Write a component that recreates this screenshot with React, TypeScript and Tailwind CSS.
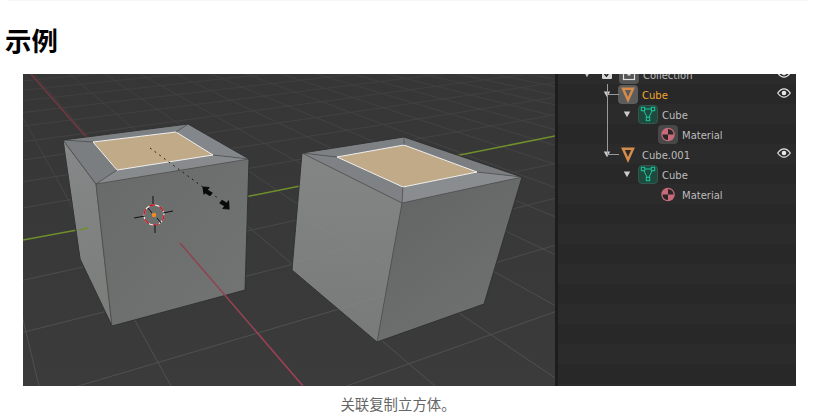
import React from "react";

const VPA = [-64, -40];
const VPB = [1640, -75];

const aLines: number[][] = [];
for (let k = -2; k <= 16; k++) aLines.push([VPA[0], VPA[1], 303 + 132 * k, 386]);
const bLines: number[][] = [];
for (let k = -11; k <= 5; k++) {
  if (k === 0) continue;
  const inv = 0.003175 - 0.00036 * k;
  const y23 = 1 / inv - 75;
  const f = (1640 - 555) / (1640 - 23);
  bLines.push([23, y23, 555, (y23 + 75) * f - 75]);
}

function Viewport() {
  return (
    <svg viewBox="23 74 532 312" className="block h-[312px] w-[532px] shrink-0">
      <defs>
        <linearGradient id="g" gradientUnits="userSpaceOnUse" x1="0" y1="74" x2="0" y2="320">
          <stop offset="0" stopColor="#3e3e3e" />
          <stop offset="0.45" stopColor="#454545" />
          <stop offset="1" stopColor="#4f4f4f" />
        </linearGradient>
        <linearGradient id="bg" x1="0" y1="0" x2="0" y2="1">
          <stop offset="0" stopColor="#363636" />
          <stop offset="1" stopColor="#3b3b3b" />
        </linearGradient>
        <linearGradient id="f1" gradientUnits="userSpaceOnUse" x1="96" y1="184" x2="245" y2="300">
          <stop offset="0" stopColor="#696b6b" />
          <stop offset="1" stopColor="#727473" />
        </linearGradient>
        <linearGradient id="l1" gradientUnits="userSpaceOnUse" x1="70" y1="150" x2="100" y2="300">
          <stop offset="0" stopColor="#858788" />
          <stop offset="1" stopColor="#7b7e7b" />
        </linearGradient>
        <linearGradient id="l2" gradientUnits="userSpaceOnUse" x1="350" y1="170" x2="340" y2="330">
          <stop offset="0" stopColor="#838585" />
          <stop offset="1" stopColor="#787b79" />
        </linearGradient>
        <linearGradient id="f2" gradientUnits="userSpaceOnUse" x1="400" y1="200" x2="480" y2="310">
          <stop offset="0" stopColor="#646666" />
          <stop offset="1" stopColor="#6e706f" />
        </linearGradient>
        <linearGradient id="red" gradientUnits="userSpaceOnUse" x1="180" y1="243" x2="303" y2="386">
          <stop offset="0" stopColor="#8c4450" />
          <stop offset="1" stopColor="#9e3f52" />
        </linearGradient>
      </defs>
      <rect x="23" y="74" width="532" height="312" fill="url(#bg)" />
      {aLines.map((l, i) => (
        <line key={i} x1={l[0]} y1={l[1]} x2={l[2]} y2={l[3]} stroke="url(#g)" strokeWidth="1" />
      ))}
      {bLines.map((l, i) => (
        <line key={i} x1={l[0]} y1={l[1]} x2={l[2]} y2={l[3]} stroke="url(#g)" strokeWidth="1" />
      ))}
      <line x1="31" y1="74" x2="87" y2="138" stroke="#713841" strokeWidth="1.6" />
      <line x1="23" y1="240" x2="88" y2="228" stroke="#6f8f2b" strokeWidth="1.6" />
      <line x1="240" y1="198" x2="310" y2="184" stroke="#6f8f2b" strokeWidth="1.6" />
      <line x1="455" y1="156" x2="555" y2="136" stroke="#6f8f2b" strokeWidth="1.6" />

      {/* cube 1 */}
      <polygon points="63,140 96,184 112,326 80,259" fill="url(#l1)" stroke="#4a4b4b" strokeWidth="0.8" />
      <line x1="79" y1="230" x2="88" y2="228" stroke="#6f8f2b" strokeWidth="1.4" />
      <polygon points="96,184 249,159 245,290 112,326" fill="url(#f1)" />
      <polygon points="63,140 93,142 117,170 96,184" fill="#7b7e81" />
      <polygon points="63,140 188,124 176,132 93,142" fill="#7d8083" />
      <polygon points="188,124 249,159 213,155 176,132" fill="#83868a" />
      <polygon points="96,184 117,170 213,155 249,159" fill="#888b8e" />
      <polygon points="93,142 176,132 213,155 117,170" fill="#c0aa88" stroke="#f2f2f2" strokeWidth="1" />
      <g stroke="#4c4d4e" strokeWidth="0.7" fill="none">
        <polyline points="63,140 96,184 112,326" />
        <line x1="96" y1="184" x2="249" y2="159" />
        <line x1="63" y1="140" x2="93" y2="142" />
        <line x1="188" y1="124" x2="176" y2="132" />
        <line x1="249" y1="159" x2="213" y2="155" />
        <line x1="96" y1="184" x2="117" y2="170" />
      </g>
      <g stroke="#2e2f2f" strokeWidth="0.9" fill="none">
        <polyline points="63,140 188,124 249,159 245,290 112,326 80,259 63,140" />
      </g>
      <line x1="180" y1="243" x2="303" y2="386" stroke="url(#red)" strokeWidth="1.6" />

      {/* cube 2 */}
      <polygon points="302,153 402,203 377,342 292,270" fill="url(#l2)" />
      <polygon points="402,203 522,177 484,304 377,342" fill="url(#f2)" />
      <polygon points="302,153 337,157 403,187 402,203" fill="#7f8285" />
      <polygon points="302,153 404,137 404,145 337,157" fill="#7e8184" />
      <polygon points="404,137 522,177 477,172 404,145" fill="#7b7e81" />
      <polygon points="402,203 403,187 477,172 522,177" fill="#8a8d90" />
      <polygon points="337,157 404,145 477,172 403,187" fill="#c0aa88" stroke="#f2f2f2" strokeWidth="1" />
      <g stroke="#8a8c8b" strokeWidth="0.8" fill="none" opacity="0.45">
        <line x1="293" y1="263" x2="363" y2="243" />
        <line x1="298" y1="215" x2="390" y2="267" />
        <line x1="342" y1="308" x2="385" y2="295" />
      </g>
      <g stroke="#4c4d4e" strokeWidth="0.7" fill="none">
        <polyline points="302,153 402,203 377,342" />
        <line x1="402" y1="203" x2="522" y2="177" />
        <line x1="302" y1="153" x2="337" y2="157" />
        <line x1="404" y1="137" x2="404" y2="145" />
        <line x1="522" y1="177" x2="477" y2="172" />
        <line x1="402" y1="203" x2="403" y2="187" />
      </g>
      <g stroke="#2e2f2f" strokeWidth="0.9" fill="none">
        <polyline points="302,153 404,137 522,177 484,304 377,342 292,270 302,153" />
      </g>

      {/* 3D cursor */}
      <g>
        <circle cx="154" cy="215" r="10" fill="none" stroke="#ececec" strokeWidth="1.2" />
        <circle cx="154" cy="215" r="10" fill="none" stroke="#c8141f" strokeWidth="1.3" strokeDasharray="6 4.500" />
        <g stroke="#111" strokeWidth="1" fill="none">
          <line x1="134" y1="218" x2="145" y2="216" />
          <line x1="163" y1="213" x2="173" y2="211" />
          <line x1="153" y1="196" x2="153" y2="204" />
          <line x1="155" y1="225" x2="155" y2="233" />
          <line x1="148" y1="208" x2="152" y2="213" />
          <line x1="157" y1="218" x2="161" y2="223" />
        </g>
        <circle cx="154" cy="215" r="2.200" fill="#ef8f1a" />
      </g>

      {/* dashed line and arrows */}
      <line x1="150" y1="148" x2="219" y2="199" stroke="#0a0a0a" strokeWidth="0.9" strokeDasharray="1.800 4" />
      <g fill="#0a0a0a" stroke="#0a0a0a" strokeWidth="1.2" strokeLinejoin="round">
        <polygon points="203,187 209,187.500 207,190 212,193 210,195.500 205,192.500 204,194" />
        <polygon points="229,209 223,208.500 225,206 220,203 222,200.500 227,203.500 228.500,201" />
      </g>
    </svg>
  );
}

function Tri() {
  return (
    <svg viewBox="0 0 8 8" className="h-2 w-2 shrink-0">
      <polygon points="0.800,1.500 7.200,1.500 4,7.200" fill="#cccccc" />
    </svg>
  );
}

function Eye() {
  return (
    <svg viewBox="0 0 14 10" className="h-[10px] w-[14px] shrink-0">
      <path d="M0.700 5C3 1.800 5 0.800 7 0.800s4 1 6.300 4.200C11 8.200 9 9.200 7 9.200S3 8.200 0.700 5Z" fill="none" stroke="#e6e6e6" strokeWidth="1.2" />
      <circle cx="7" cy="5" r="2.300" fill="#e6e6e6" />
    </svg>
  );
}

function ObjIcon() {
  return (
    <svg viewBox="0 0 20 20" className="h-5 w-5 shrink-0">
      <polygon points="5,4.800 15,4.800 10,16" fill="none" stroke="#d58b4a" strokeWidth="2.500" />
    </svg>
  );
}

function MeshIcon() {
  return (
    <svg viewBox="0 0 20 20" className="h-5 w-5 shrink-0">
      <g fill="none" stroke="#1ec49e" strokeWidth="1">
        <polyline points="5,5 15,5 10,15 5,5" />
        <rect x="3.300" y="3.300" width="3.400" height="3.400" fill="#1e4a3e" />
        <rect x="13.300" y="3.300" width="3.400" height="3.400" fill="#1e4a3e" />
        <rect x="8.300" y="13.300" width="3.400" height="3.400" fill="#1e4a3e" />
      </g>
    </svg>
  );
}

function MatIcon() {
  return (
    <svg viewBox="0 0 20 20" className="h-5 w-5 shrink-0">
      <circle cx="10" cy="10.500" r="6.800" fill="#c76b7b" />
      <path d="M10 10.500V5A5.500 5.500 0 0 1 15.500 10.500Z" fill="#2c2426" />
      <path d="M10 10.500V16A5.500 5.500 0 0 1 4.500 10.500Z" fill="#2c2426" />
    </svg>
  );
}

function CollectionIcon() {
  return (
    <svg viewBox="0 0 20 20" className="h-5 w-5 shrink-0">
      <rect x="4.500" y="4.500" width="11" height="11" fill="none" stroke="#e0e0e0" strokeWidth="1.2" />
      <rect x="8.500" y="8.500" width="3" height="3" fill="#e0e0e0" />
    </svg>
  );
}

function Check() {
  return (
    <svg viewBox="0 0 10 10" className="h-[10px] w-[10px] shrink-0">
      <rect width="10" height="10" rx="1" fill="#d8d8d8" />
      <path d="M2.500 5l2 2 3-4" fill="none" stroke="#222" strokeWidth="1.500" />
    </svg>
  );
}

type RowProps = {
  pad: string;
  bg: string;
  arrow?: boolean;
  check?: boolean;
  iconBox?: string;
  icon: React.ReactNode;
  label: string;
  labelColor?: string;
  eye?: boolean;
};

function Row({ pad, bg, arrow, check, iconBox, icon, label, labelColor, eye }: RowProps) {
  return (
    <div className={`flex h-5 shrink-0 items-center ${pad} ${bg}`}>
      <div className="flex h-5 w-[20px] shrink-0 items-center justify-center">{arrow && <Tri />}</div>
      {check && (
        <div className="flex h-5 w-[21px] shrink-0 items-center justify-center pr-[1px]">
          <Check />
        </div>
      )}
      <div className={`ml-[1px] flex h-[19px] w-5 shrink-0 items-center justify-center rounded-[4px] ${iconBox ?? ""}`}>{icon}</div>
      <span className={`ml-1 pt-[4px] text-[10px] leading-none ${labelColor ?? "text-[#bcbcbc]"}`}>{label}</span>
      {eye && (
        <div className="mb-[2px] ml-auto mr-[5px]">
          <Eye />
        </div>
      )}
    </div>
  );
}

const dark = "bg-[#282828]";
const light = "bg-[#2b2b2b]";

function Outliner() {
  const empties = Array.from({ length: 10 }, (_, i) => i);
  return (
    <div className="relative h-[312px] w-[241px] shrink-0 overflow-hidden border-l-[3px] border-[#1d1d1d] bg-[#282828] font-['DejaVu_Sans',sans-serif]">
      <div className="-mt-[10px] flex flex-col">
        <Row pad="pl-[19px]" bg={light} arrow check iconBox="bg-[#555555]" icon={<CollectionIcon />} label="Collection" eye />
        <Row pad="pl-[39px]" bg={dark} arrow iconBox="bg-[#5c5c5c]" icon={<ObjIcon />} label="Cube" labelColor="text-[#f0a530]" eye />
        <Row pad="pl-[59px]" bg={light} arrow iconBox="bg-[#1e4a3e] border border-[#33574f]" icon={<MeshIcon />} label="Cube" />
        <Row pad="pl-[79px]" bg={dark} iconBox="bg-[#484848]" icon={<MatIcon />} label="Material" />
        <Row pad="pl-[39px]" bg={light} arrow icon={<ObjIcon />} label="Cube.001" eye />
        <Row pad="pl-[59px]" bg={dark} arrow iconBox="bg-[#1e4a3e] border border-[#33574f]" icon={<MeshIcon />} label="Cube" />
        <Row pad="pl-[79px]" bg={light} icon={<MatIcon />} label="Material" />
        {empties.map((i) => (
          <div key={i} className={`h-5 shrink-0 ${i % 2 === 0 ? dark : light}`} />
        ))}
      </div>
      <div className="absolute left-[49px] top-[10px] h-[71px] w-px bg-[#9a9a9a]" />
      <div className="absolute left-[49px] top-[20px] h-px w-[12px] bg-[#9a9a9a]" />
      <div className="absolute left-[49px] top-[80px] h-px w-[12px] bg-[#9a9a9a]" />
    </div>
  );
}

export default function App() {
  return (
    <div className="h-[419px] w-[823px] overflow-hidden bg-white font-['Liberation_Sans','Noto_Sans_CJK_SC',sans-serif]">
      <div className="ml-2 h-px w-[800px] bg-[#f6f6f6]" />
      <h2 className="pl-[5px] pt-[25px] text-[26.4px] font-bold leading-[32px] text-black">示例</h2>
      <div className="mt-[16px] flex pl-[23px]">
        <Viewport />
        <Outliner />
      </div>
      <p className="mt-[10px] w-[796px] text-center text-[14.4px] leading-[18px] text-[#666666]">关联复制立方体。</p>
    </div>
  );
}
